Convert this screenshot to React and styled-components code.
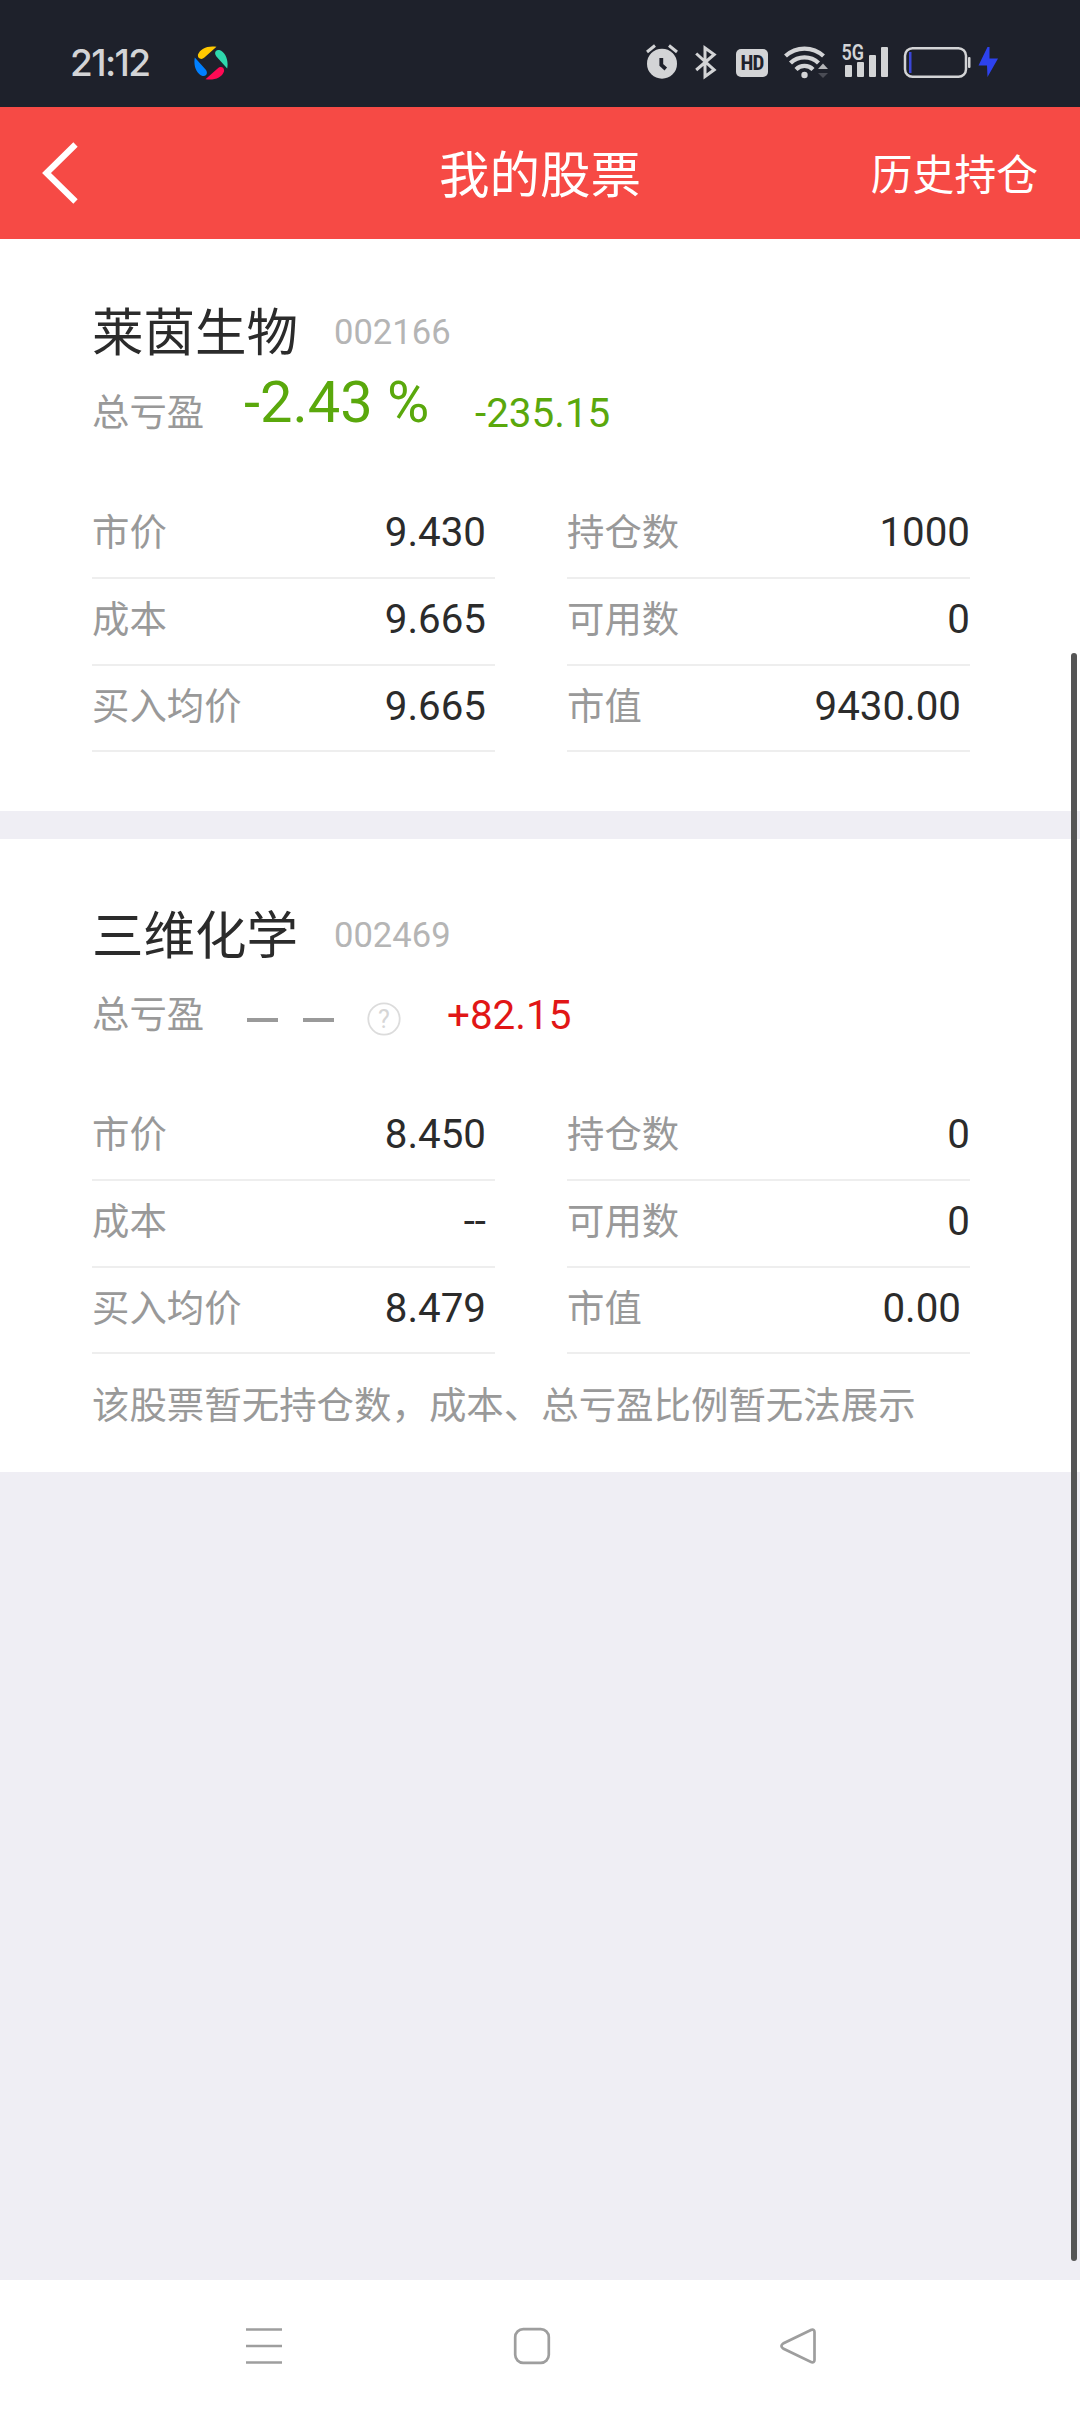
import React, { Component } from "react";
import styled, { createGlobalStyle } from "styled-components";

const GlobalStyle = createGlobalStyle`
    html, body {
        margin: 0;
        padding: 0;
    }
    * {
        box-sizing: border-box;
    }
`

let Screen = styled.div`
    position: relative;
    display: flex;
    flex-direction: column;
    width: 1080px;
    height: 2412px;
    overflow: hidden;
    background: #efeef4;
    color: #2b2b2b;
    font-family: Roboto, "Noto Sans CJK SC", sans-serif;
    white-space: nowrap;
    svg {
        display: block;
        flex: none;
    }
`
let StatusBar = styled.div`
    display: flex;
    align-items: flex-start;
    height: 107px;
    padding: 44px 82px 0 70px;
    background: #1e212b;
    color: #d3d4d6;
    .logo {
        margin: 2px 0 0 43px;
    }
`
let Clock = styled.span`
    width: 81px;
    font-family: Inter, sans-serif;
    font-size: 37px;
    font-weight: 500;
    line-height: 38px;
    letter-spacing: -1.6px;
`
let StatusIcons = styled.div`
    display: flex;
    margin-left: auto;
    .alarm {
        margin-right: 17px;
    }
    .signal {
        margin-top: -10px;
    }
`
let HdBadge = styled.span`
    width: 32px;
    height: 28px;
    margin: 5px 16px 0 19px;
    border-radius: 5px;
    background: #d3d4d6;
    color: #1e212b;
    font-family: "Roboto Condensed", Roboto, sans-serif;
    font-size: 21px;
    font-weight: 700;
    line-height: 28px;
    letter-spacing: -1px;
    text-align: center;
`
let Header = styled.div`
    display: grid;
    grid-template-columns: 1fr auto 1fr;
    align-items: center;
    height: 132px;
    padding: 0 42px;
    background: #f64a45;
    color: #fff;
`
let Title = styled.h1`
    margin: 0;
    padding-top: 6px;
    font-size: 50.5px;
    font-weight: 400;
    line-height: 60px;
`
let HistoryLink = styled.a`
    justify-self: end;
    padding-top: 6px;
    font-size: 41.8px;
    line-height: 60px;
`
let Card = styled.section`
    height: ${props => props.height}px;
    margin-bottom: 28px;
    padding: ${props => props.top}px 110px 0 92px;
    background: #fff;
`
let NameRow = styled.div`
    display: flex;
    height: 70px;
    line-height: 70px;
`
let StockName = styled.span`
    width: 242px;
    font-size: 51.5px;
`
let StockCode = styled.span`
    color: #b5b5b5;
    font-size: 34.6px;
    line-height: 67px;
`
let ProfitRow = styled.div`
    display: flex;
    align-items: flex-start;
    height: ${props => props.height}px;
    line-height: 60px;
    .help {
        margin: 30px 46px 0 33px;
    }
`
let Label = styled.span`
    color: #999;
    font-size: 37.4px;
`
let ProfitLabel = styled(Label)`
    width: 151px;
    padding-top: ${props => props.up ? 13 : 14}px;
`
let Percent = styled.span`
    width: 232px;
    padding: 3px 0 0 1px;
    color: #5aa80c;
    font-size: 57.8px;
`
let Amount = styled.span`
    padding-top: ${props => props.up ? 14 : 15}px;
    color: ${props => props.up ? "#e11616" : "#5aa80c"};
    font-size: 40.4px;
`
let Dashes = styled.span`
    display: flex;
    gap: 25px;
    padding: 46px 0 0 4px;
    i {
        width: 31px;
        height: 4px;
        background: #9a9a9a;
    }
`
let Table = styled.div`
    display: grid;
    grid-template-columns: 403px 403px;
    column-gap: 72px;
`
let Cell = styled.div`
    display: flex;
    justify-content: space-between;
    height: 86.6px;
    padding-right: ${props => props.inset || 0}px;
    border-bottom: 2px solid #eee;
    line-height: 82px;
    ${Label} {
        line-height: 83px;
    }
`
let Value = styled.span`
    font-size: 40.3px;
`
let Note = styled.p`
    margin: 17px 0 0;
    color: #999;
    font-size: 37.45px;
    line-height: 70px;
`
let ScrollBar = styled.div`
    position: absolute;
    top: 653px;
    right: 3px;
    width: 6px;
    height: 1608px;
    border-radius: 3px;
    background: #555;
`
let NavBar = styled.div`
    display: flex;
    gap: 229.5px;
    height: 132px;
    margin-top: auto;
    padding: 47px 0 0 245px;
    background: #fff;
`

const LOGO = ["#ffc800", "#2fd8ac", "#ff0a54", "#0080ff"];

const STOCKS = [
    {
        name: "莱茵生物",
        code: "002166",
        percent: "-2.43 %",
        amount: "-235.15",
        height: 572,
        top: 60,
        profitHeight: 123.4,
        cells: [
            ["市价", "9.430", 9], ["持仓数", "1000", 0],
            ["成本", "9.665", 9], ["可用数", "0", 0],
            ["买入均价", "9.665", 9], ["市值", "9430.00", 9]
        ]
    },
    {
        name: "三维化学",
        code: "002469",
        amount: "+82.15",
        up: true,
        height: 633,
        top: 63,
        profitHeight: 122.4,
        cells: [
            ["市价", "8.450", 9], ["持仓数", "0", 0],
            ["成本", "--", 9], ["可用数", "0", 0],
            ["买入均价", "8.479", 9], ["市值", "0.00", 9]
        ],
        note: "该股票暂无持仓数，成本、总亏盈比例暂无法展示"
    }
];

class Status extends Component {
    render() {
        return (
            <StatusBar>
                <Clock>21:12</Clock>
                <svg className="logo" width="34" height="34" viewBox="0 0 34 34">
                    {LOGO.map((color, i) => (
                        <path key={color} fill={color} transform={`rotate(${i * 90} 17 17)`}
                            d="M22.5 0.8C14-.8 6 2.6 4 8.6c-.8 4.200 3.600 5.600 6.400 3z"/>
                    ))}
                </svg>
                <StatusIcons>
                    <svg className="alarm" width="32" height="36" viewBox="0 0 32 36">
                        <path d="M1 8l8-6.500M31 8l-8-6.500" stroke="#d3d4d6" strokeWidth="3"/>
                        <circle cx="16" cy="19.700" r="15" fill="#d3d4d6"/>
                        <path d="M15.300 14v7l4.500 4" stroke="#1e212b" strokeWidth="3.800" fill="none"/>
                    </svg>
                    <svg width="22" height="36" viewBox="0 0 22 36">
                        <path d="M1.200 9.500l18 16.300L10 32.500V4L19.200 10.500L1.200 26"
                            stroke="#d3d4d6" strokeWidth="3" fill="none"/>
                    </svg>
                    <HdBadge>HD</HdBadge>
                    <svg width="45" height="36" viewBox="0 0 45 36">
                        <g stroke="#d3d4d6" strokeWidth="4.300" fill="none">
                            <path d="M1.500 12a28 28 0 0 1 38 0"/>
                            <path d="M6.500 19a20 20 0 0 1 28 0"/>
                            <path d="M12 25.500a12 12 0 0 1 17 0"/>
                        </g>
                        <circle cx="20.500" cy="31" r="3.200" fill="#d3d4d6"/>
                        <path d="M34 25l5-5.500 5 5.500z" fill="#b5b6b9"/>
                        <path d="M34 29l5 5 5-5z" fill="#4a4c55"/>
                    </svg>
                    <svg className="signal" width="60" height="46" viewBox="0 -10 60 46">
                        <g fill="#d3d4d6">
                            <rect x="16" y="21" width="7" height="12" rx="1"/>
                            <rect x="28" y="18" width="7" height="15" rx="1"/>
                            <rect x="40" y="11" width="7" height="22" rx="1"/>
                            <rect x="52" y="3" width="7" height="30" rx="1"/>
                        </g>
                        <text x="12.500" y="16.300" fill="#d3d4d6" fontFamily="Roboto" fontWeight="600" fontSize="22"
                            textLength="22.500" lengthAdjust="spacingAndGlyphs">5G</text>
                    </svg>
                    <svg width="109" height="36" viewBox="0 0 109 36">
                        <rect x="16" y="4.200" width="61" height="28.600" rx="7.500" stroke="#d3d4d6" strokeWidth="2.500" fill="none"/>
                        <rect x="20" y="8" width="2.500" height="21" fill="#3a46d8"/>
                        <rect x="79" y="13" width="2.500" height="11" rx="1" fill="#d3d4d6"/>
                        <path d="M98.500 3L89.500 21.500H98l.5 11.500L109 14.500h-8.500V3z" fill="#2d42ee"/>
                    </svg>
                </StatusIcons>
            </StatusBar>
        );
    }
}

class Stock extends Component {
    render() {
        const { stock } = this.props;
        return (
            <Card height={stock.height} top={stock.top}>
                <NameRow>
                    <StockName>{stock.name}</StockName>
                    <StockCode>{stock.code}</StockCode>
                </NameRow>
                <ProfitRow height={stock.profitHeight}>
                    <ProfitLabel up={stock.up}>总亏盈</ProfitLabel>
                    {stock.percent ? <Percent>{stock.percent}</Percent> : <>
                        <Dashes><i/><i/></Dashes>
                        <svg className="help" width="34" height="34" viewBox="0 0 34 34">
                            <circle cx="17" cy="17" r="15.700" stroke="#dcdcdc" strokeWidth="1.800" fill="none"/>
                            <text x="17" y="26" textAnchor="middle" fontFamily="Roboto" fontSize="25" fill="#d6d6d6">?</text>
                        </svg>
                    </>}
                    <Amount up={stock.up}>{stock.amount}</Amount>
                </ProfitRow>
                <Table>
                    {stock.cells.map(([label, value, inset]) => (
                        <Cell key={label} inset={inset}>
                            <Label>{label}</Label>
                            <Value>{value}</Value>
                        </Cell>
                    ))}
                </Table>
                {stock.note && <Note>{stock.note}</Note>}
            </Card>
        );
    }
}

class App extends Component {
    render() {
        return (
            <Screen>
                <GlobalStyle/>
                <Status/>
                <Header>
                    <svg width="36" height="62" viewBox="0 0 36 62">
                        <path d="M33.500 2.500L4.500 31l29 28.500" stroke="#fff" strokeWidth="6.200" fill="none"/>
                    </svg>
                    <Title>我的股票</Title>
                    <HistoryLink>历史持仓</HistoryLink>
                </Header>
                {STOCKS.map(stock => <Stock key={stock.code} stock={stock}/>)}
                <ScrollBar/>
                <NavBar>
                    <svg width="38" height="38" viewBox="0 0 38 38">
                        <path d="M1 2.500h36M1 19h36M1 35.500h36" stroke="#9e9e9e" strokeWidth="2.700"/>
                    </svg>
                    <svg width="38" height="38" viewBox="0 0 38 38">
                        <rect x="2.200" y="2.200" width="33.600" height="33.600" rx="8" stroke="#9e9e9e" strokeWidth="2.700" fill="none"/>
                    </svg>
                    <svg width="38" height="38" viewBox="0 0 38 38">
                        <path d="M31.500 2.800L3.600 16.200q-4.400 2.800 0 5.600L31.500 35.200q3 .6 3-2.200V5q0-2.800-3-2.200z"
                            stroke="#9e9e9e" strokeWidth="2.700" fill="none"/>
                    </svg>
                </NavBar>
            </Screen>
        );
    }
}

export default App;
